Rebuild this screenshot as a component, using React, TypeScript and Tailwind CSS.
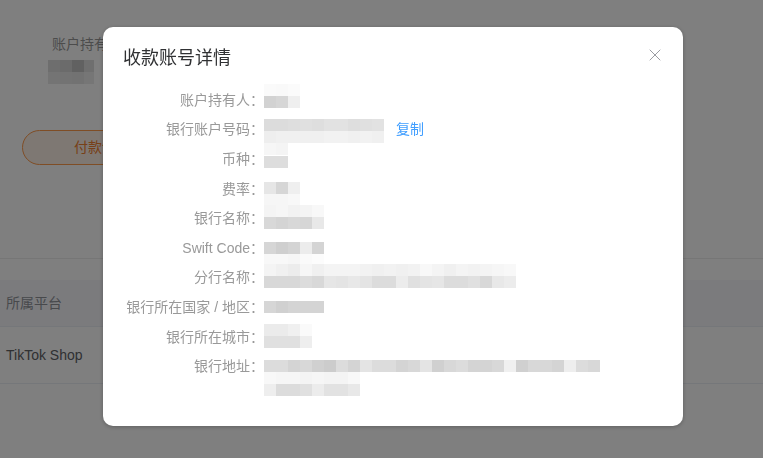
import { X } from 'lucide-react'

type MosaicLine = { top: number; cells: string[] }

interface DetailRow {
    label: string
    center: number
    lines: MosaicLine[]
    copy?: boolean
}

const rows: DetailRow[] = [
    {
        label: '账户持有人',
        center: 100,
        lines: [
            { top: 84, cells: ['#fafafa', '#f9f9f9', '#fbfbfb'] },
            { top: 96, cells: ['#d2d2d2', '#d6d6d6', '#efefef'] },
        ],
    },
    {
        label: '银行账户号码',
        center: 130,
        copy: true,
        lines: [
            { top: 120, cells: ['#dcdcdc', '#dcdcdc', '#dedede', '#e0e0e0', '#dedede', '#e2e2e2', '#e2e2e2', '#dedede', '#e0e0e0', '#e2e2e2'] },
            { top: 132, cells: ['#eeeeee', '#f0f0f0', '#f0f0f0', '#f0f0f0', '#f0f0f0', '#f2f2f2', '#f2f2f2', '#f0f0f0', '#f2f2f2', '#f0f0f0'] },
            { top: 144, cells: ['#f6f6f6', '#f4f4f4'] },
        ],
    },
    {
        label: '币种',
        center: 159,
        lines: [{ top: 156, cells: ['#dddddd', '#dddddd'] }],
    },
    {
        label: '费率',
        center: 187,
        lines: [
            { top: 180, cells: ['#e6e6e6', '#d6d6d6', '#efefef'] },
            { top: 192, cells: ['#f6f6f6', '#f6f6f6', '#f8f8f8'] },
        ],
    },
    {
        label: '银行名称',
        center: 217,
        lines: [
            { top: 204, cells: ['#f4f4f4', '#f6f6f6', '#f2f2f2', '#f4f4f4', '#f8f8f8'] },
            { top: 216, cells: ['#d8d8d8', '#d4d4d4', '#d8d8d8', '#d6d6d6', '#e8e8e8'] },
        ],
    },
    {
        label: 'Swift Code',
        center: 246,
        lines: [
            { top: 240, cells: ['#d6d6d6', '#cfcfcf', '#d4d4d4', '#ececec', '#d4d4d4'] },
            { top: 252, cells: ['#f8f8f8', '#f8f8f8', '#f6f6f6', '#fafafa', '#fcfcfc'] },
        ],
    },
    {
        label: '分行名称',
        center: 277,
        lines: [
            { top: 264, cells: ['#f4f4f4', '#f0f0f0', '#ececec', '#f6f6f6', '#f0f0f0', '#f4f4f4', '#f4f4f4', '#f4f4f4', '#f2f2f2', '#f0f0f0', '#f2f2f2', '#f0f0f0', '#f2f2f2', '#f8f8f8', '#f4f4f4', '#f0f0f0', '#f4f4f4', '#f2f2f2', '#f4f4f4', '#f6f6f6', '#f8f8f8'] },
            { top: 276, cells: ['#d8d8d8', '#d8d8d8', '#d8d8d8', '#dcdcdc', '#d8d8d8', '#e6e6e6', '#e4e4e4', '#e8e8e8', '#e4e4e4', '#dcdcdc', '#dcdcdc', '#ececec', '#e0e0e0', '#e4e4e4', '#e6e6e6', '#dcdcdc', '#dcdcdc', '#e0e0e0', '#d8d8d8', '#e8e8e8', '#ececec'] },
        ],
    },
    {
        label: '银行所在国家 / 地区',
        center: 306,
        lines: [{ top: 300, cells: ['#d6d6d6', '#d0d0d0', '#d4d4d4', '#d4d4d4', '#d4d4d4'] }],
    },
    {
        label: '银行所在城市',
        center: 337,
        lines: [
            { top: 324, cells: ['#ebebeb', '#ebebeb', '#f0f0f0', '#fafafa'] },
            { top: 336, cells: ['#e0e0e0', '#e0e0e0', '#e0e0e0', '#eeeeee'] },
        ],
    },
    {
        label: '银行地址',
        center: 366,
        lines: [
            { top: 360, cells: ['#dcdcdc', '#dcdcdc', '#d4d4d4', '#d8d8d8', '#d0d0d0', '#cccccc', '#dcdcdc', '#d4d4d4', '#e4e4e4', '#dcdcdc', '#dcdcdc', '#d4d4d4', '#d8d8d8', '#e4e4e4', '#d0d0d0', '#d8d8d8', '#dcdcdc', '#d4d4d4', '#d4d4d4', '#d8d8d8', '#f0f0f0', '#d0d0d0', '#d8d8d8', '#d8d8d8', '#d4d4d4', '#eeeeee', '#dcdcdc', '#d8d8d8'] },
            { top: 372, cells: ['#f8f8f8', '#f6f6f6', '#f6f6f6', '#f4f4f4', '#f6f6f6', '#f4f4f4', '#f4f4f4', '#f8f8f8'] },
            { top: 384, cells: ['#eeeeee', '#dcdcdc', '#dcdcdc', '#e0e0e0', '#ececec', '#e2e2e2', '#e2e2e2', '#e8e8e8'] },
        ],
    },
]

// pixelated (redacted) value, drawn relative to the row's centre line
function Mosaic({ lines, center }: { lines: MosaicLine[]; center: number }) {
    const width = Math.max(...lines.map(l => l.cells.length)) * 12
    return (
        <svg width={width} height={30} className="block shrink-0 overflow-visible">
            {lines.map(line =>
                line.cells.map((fill, i) => (
                    <rect key={`${line.top}-${i}`} x={i * 12} y={line.top - center + 15} width={12} height={12} fill={fill} />
                ))
            )}
        </svg>
    )
}

export default function App() {
    return (
        <div className="relative w-full h-[458px] overflow-hidden bg-white" style={{ fontFamily: '"Liberation Sans", "Noto Sans CJK SC", sans-serif' }}>
            {/* Page behind the dialog */}
            <div className="pt-[34px] pl-[52px]">
                <p className="text-[14px] leading-[20px] text-[#999999]">账户持有人</p>
                <svg width={48} height={24} className="block mt-[6px] -ml-[4px]">
                    {['#dcdcdc', '#d6d6d6', '#c2c2c2', '#dedede'].map((f, i) => (
                        <rect key={i} x={i * 12} y={0} width={i === 3 ? 10 : 12} height={12} fill={f} />
                    ))}
                    {['#e8e8e8', '#e6e6e6', '#e4e4e4', '#ececec'].map((f, i) => (
                        <rect key={i} x={i * 12} y={12} width={i === 3 ? 10 : 12} height={12} fill={f} />
                    ))}
                </svg>
            </div>
            <button className="ml-[22px] mt-[46px] w-[160px] h-[35px] rounded-full border border-[#ff9a4a] bg-[#fdf1e7] text-[14px] text-[#f08030]">
                付款详情
            </button>
            <div className="mt-[93px] border-t border-[#ececec]">
                <div className="h-[21px]" />
                <div className="h-[47px] bg-[#f6f7fb] border-b border-[#ebeef5] flex items-center pl-[6px] text-[14px] text-[#909399]">
                    所属平台
                </div>
                <div className="h-[57px] border-b border-[#ebeef5] flex items-center pl-[6px] text-[14px] text-[#606266]">
                    TikTok Shop
                </div>
            </div>

            {/* Overlay + dialog */}
            <div className="fixed inset-0 bg-black/50">
                <div className="ml-[103px] mt-[27px] w-[580px] h-[399px] bg-white rounded-[10px] shadow-[0_1px_4px_rgba(0,0,0,0.25)] pl-[20px] pr-[18px] pt-[19px]">
                    <div className="flex items-start justify-between">
                        <h2 className="text-[18px] leading-[24px] text-[#303133]">收款账号详情</h2>
                        <button className="-mt-[1px] text-[#909399]">
                            <X size={20} strokeWidth={1.1} />
                        </button>
                    </div>

                    <div className="mt-[15px]">
                        {rows.map(row => (
                            <div key={row.label} className="h-[29.6px] flex items-center">
                                <div className="w-[141px] shrink-0 text-right text-[14px] leading-[20px] text-[#999999] whitespace-nowrap">
                                    {row.label}：
                                </div>
                                <Mosaic lines={row.lines} center={row.center} />
                                {row.copy && <span className="ml-[12px] text-[14px] leading-[20px] text-[#409eff] cursor-pointer">复制</span>}
                            </div>
                        ))}
                    </div>
                </div>
            </div>
        </div>
    )
}
